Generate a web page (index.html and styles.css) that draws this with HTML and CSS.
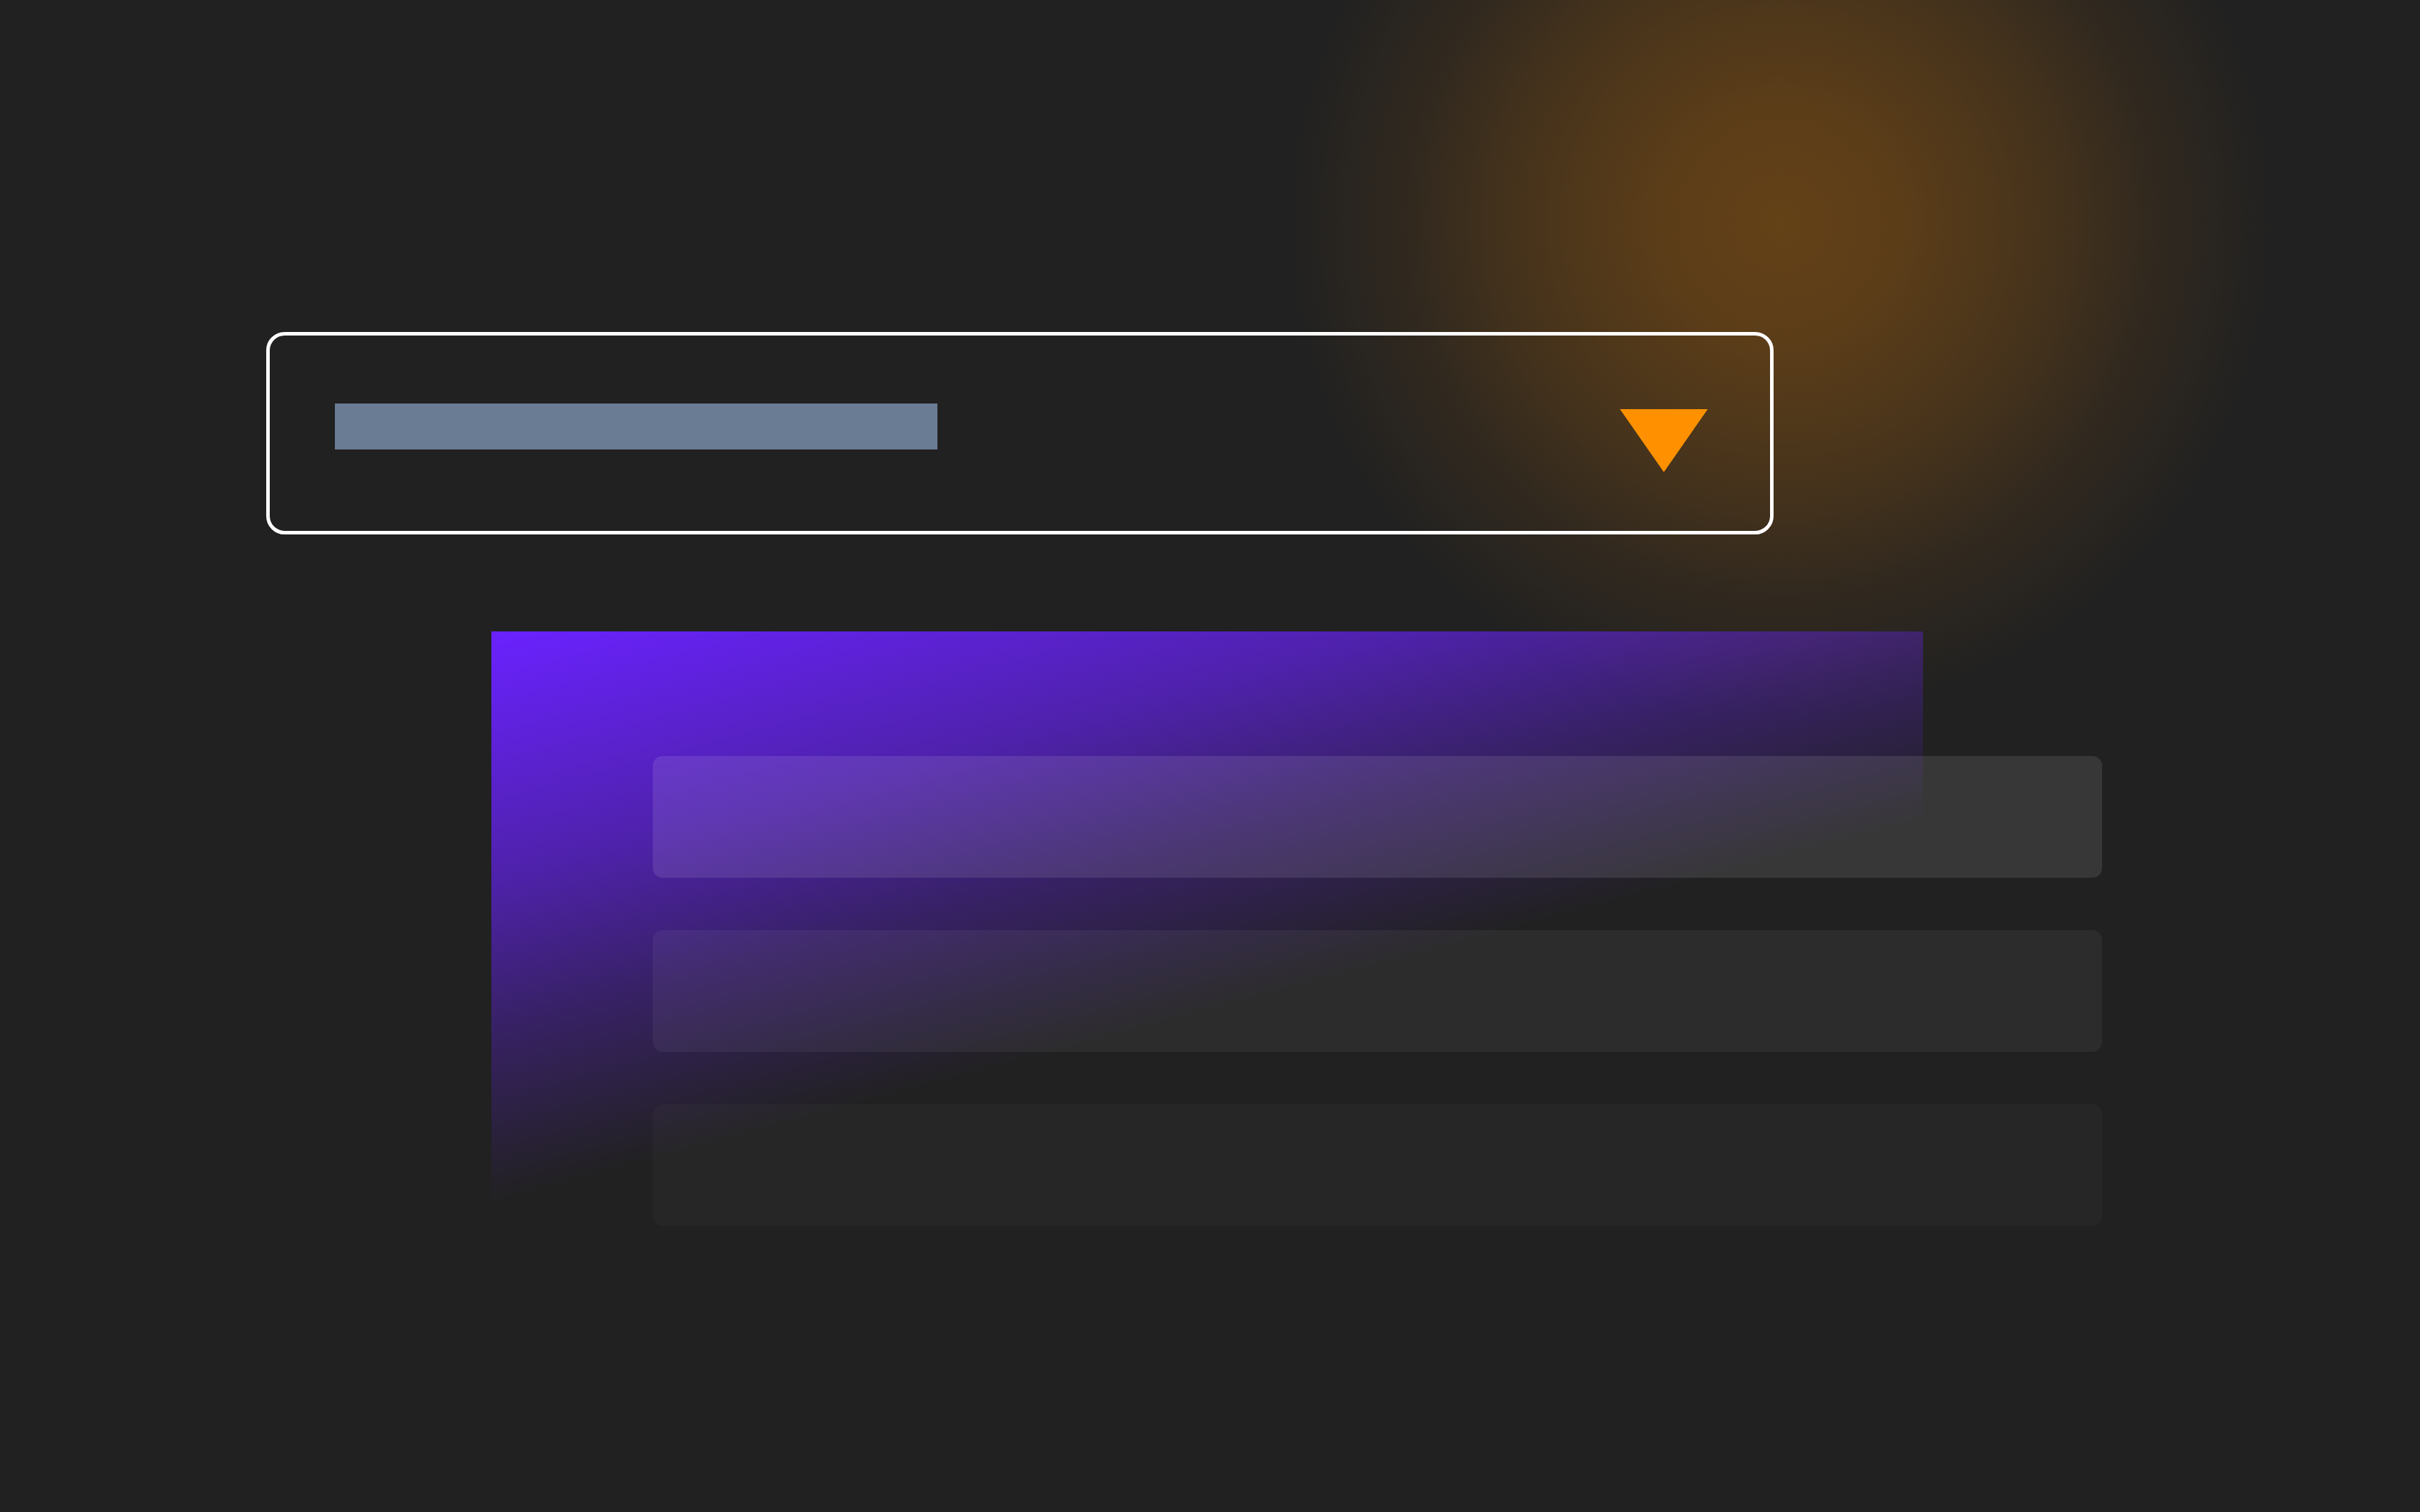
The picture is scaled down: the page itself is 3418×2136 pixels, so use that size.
FILE: index.html
```html
<!DOCTYPE html>
<html lang="en">
<head>
  <meta charset="UTF-8">
  <title>Dropdown</title>
  <link rel="stylesheet" href="styles.css">
</head>
<body>

<main class="canvas">
  <div class="select">
    <div class="select-value"></div>
    <svg class="select-arrow" width="124" height="89" viewBox="0 0 124 89">
      <polygon points="0,0 124,0 62,89" fill="#ff9100"/>
    </svg>
  </div>

  <div class="panel">
    <ul class="options">
      <li class="option option-1"></li>
      <li class="option option-2"></li>
      <li class="option option-3"></li>
    </ul>
  </div>
</main>

</body>
</html>
```

FILE: styles.css
```css
html, body { margin: 0; padding: 0; }
body {
  min-height: 100vh;
  font-family: "Liberation Sans", Arial, sans-serif;
  background:
    radial-gradient(circle at 2515px 315px,
      rgba(255, 140, 0, .30) 0,
      rgba(255, 140, 0, .26) 180px,
      rgba(255, 140, 0, .17) 370px,
      rgba(255, 140, 0, .07) 530px,
      rgba(255, 140, 0, 0) 700px),
    #212121;
}
.canvas { padding: 469px 0 0 376px; }

.select {
  box-sizing: border-box;
  width: 2129px;
  height: 286px;
  border: 5px solid #fff;
  border-radius: 26px;
  padding: 96px 88px 0 92px;
  display: flex;
  justify-content: space-between;
  align-items: flex-start;
}
.select-value { width: 851px; height: 65px; background: #697c94; }
.select-arrow { display: block; margin-top: 8px; }

.panel {
  box-sizing: border-box;
  width: 2022px;
  height: 808px;
  margin: 137px 0 0 318px;
  padding: 176px 0 0 228px;
  background: linear-gradient(165deg,
    #6a22ff 0%,
    rgba(106, 34, 255, .62) 26%,
    rgba(106, 34, 255, .3) 42%,
    rgba(106, 34, 255, 0) 60%);
}
.options {
  list-style: none;
  margin: 0;
  padding: 0;
  width: 2047px;
  display: flex;
  flex-direction: column;
  gap: 74px;
}
.option { height: 172px; border-radius: 14px; }
.option-1 { background: rgba(255, 255, 255, .1); }
.option-2 { background: rgba(255, 255, 255, .05); }
.option-3 { background: rgba(255, 255, 255, .025); }
```
